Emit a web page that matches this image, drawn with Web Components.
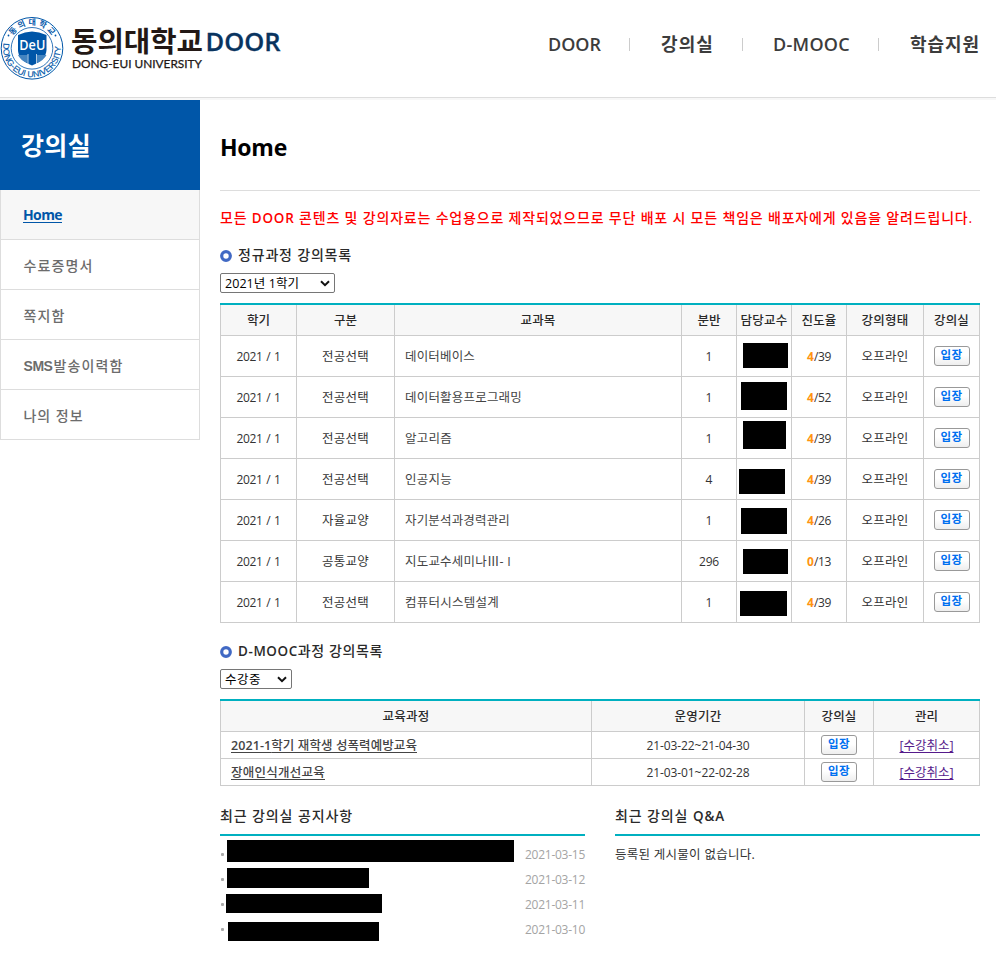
<!DOCTYPE html>
<html lang="ko">
<head>
<meta charset="utf-8">
<title>동의대학교 DOOR</title>
<style>
html,body{margin:0;background:#fff}
body{font-family:"Open Sans","Noto Sans CJK KR",sans-serif;font-size:12px;color:#333;width:996px;height:956px;overflow:hidden}
</style>
</head>
<body>
<door-page></door-page>
<script>
class Base extends HTMLElement{
  connectedCallback(){
    if(this.shadowRoot)return;
    this.attachShadow({mode:'open'}).innerHTML='<style>*{box-sizing:border-box}'+this.css()+'</style>'+this.html();
    this.ready&&this.ready();
  }
  css(){return ':host{display:block}'}
  html(){return '<slot></slot>'}
  a(n,d=''){return this.getAttribute(n)??d}
}

class DoorPage extends Base{
  css(){return `:host{display:block}
    .body{display:grid;grid-template-columns:200px 760px;column-gap:20px;align-items:start}`}
  html(){return `<door-header></door-header><div class="body"><door-sidebar></door-sidebar><door-main></door-main></div>`}
}

class DoorLogo extends Base{
  css(){return `:host{display:block;width:290px;height:96px}svg{display:block}`}
  html(){return `<svg width="290" height="96" viewBox="0 0 290 96">
    <defs>
      <path id="top" d="M9 48a23 23 0 0 1 46 0"/>
      <path id="bottom" d="M4.300 40a28.900 28.900 0 1 0 55.400 0"/>
    </defs>
    <g fill="none" stroke="#0056a8">
      <circle cx="32" cy="48.300" r="30.800" stroke-width="1"/>
      <circle cx="32" cy="48.300" r="20.800" stroke-width=".8"/>
    </g>
    <path d="M18 35Q25 32 32 31.600Q39 32 46.500 35V50Q46 60 32 65.500Q18 60 18 50Z" fill="#0056a8"/>
    <path d="M18 55h9.500v8Q20 60 18 55ZM46.500 55H37v8Q44 60 46.500 55Z" fill="#4384c0"/>
    <path d="M28 54V64M36.500 54V64" stroke="#fff" stroke-width=".7"/>
    <g fill="#fff" font-family="Open Sans" text-anchor="middle">
      <text x="32.300" y="50" font-size="14" font-weight="600" textLength="26" lengthAdjust="spacingAndGlyphs">DeU</text>
    </g>
    <g fill="#0056a8">
      <text font-family="Noto Sans CJK KR" font-weight="700" font-size="8"><textPath href="#top" startOffset="13" textLength="46">동의대학교</textPath></text>
      <text font-family="Liberation Sans" font-size="8.500" stroke="#0056a8" stroke-width=".15"><textPath href="#bottom" startOffset="3" textLength="98" lengthAdjust="spacingAndGlyphs">DONG-EUI UNIVERSITY</textPath></text>
      <circle cx="8.500" cy="35.500" r=".9"/><circle cx="55.500" cy="35.500" r=".9"/>
    </g>
    <text x="71" y="52" font-family="Noto Sans CJK KR" font-weight="700" font-size="28" fill="#231815" textLength="132" lengthAdjust="spacingAndGlyphs">동의대학교</text>
    <text x="72" y="68" font-family="Lato" font-size="12" fill="#231815" stroke="#231815" stroke-width=".25" textLength="130" lengthAdjust="spacingAndGlyphs">DONG-EUI UNIVERSITY</text>
    <text x="205.500" y="50.500" font-family="Open Sans" font-weight="600" font-size="26" fill="#09345f" stroke="#09345f" stroke-width=".3" textLength="75" lengthAdjust="spacingAndGlyphs">DOOR</text>
  </svg>`}
}

class DoorHeader extends Base{
  css(){return `:host{display:flex;justify-content:space-between;height:100px;border-bottom:2px solid #f7f7f7;box-sizing:border-box;
      background:linear-gradient(#ddd,#ddd) 0 97px/100% 1px no-repeat}
    nav{display:flex;align-items:center;height:26px;margin:31px 16px 0 0;font-size:18px;font-weight:600;color:#3c3c3c;line-height:26px}
    i{width:1px;height:13px;background:#ccc}`}
  html(){return `<door-logo></door-logo><nav>
    <fit-text w="53">DOOR</fit-text><i style="margin:0 31px 0 28px"></i>
    <fit-text w="53" kr>강의실</fit-text><i style="margin:0 30px 0 28px"></i>
    <fit-text w="77">D-MOOC</fit-text><i style="margin:0 31px 0 28px"></i>
    <fit-text w="70" kr>학습지원</fit-text></nav>`}
}

class DoorSidebar extends Base{
  css(){return `:host{display:block}
    h2{margin:0;height:90px;padding:0 0 0 21px;background:#0056a8;color:#fff;font-size:25px;line-height:91px;font-weight:700}`}
  html(){return `<h2><fit-text w="70" kr>강의실</fit-text></h2>
    <side-item w="39" active>Home</side-item><side-item w="70" kr>수료증명서</side-item><side-item w="42" kr>쪽지함</side-item>
    <side-item w="100" sms kr>발송이력함</side-item><side-item w="60" kr>나의 정보</side-item>`}
}
class SideItem extends Base{
  css(){return `:host{display:block;box-sizing:border-box;height:50px;border:1px solid #ddd;border-top:0;padding-left:22.500px;line-height:51px;font-size:14px;font-weight:500;color:#6c6c6c}
    :host([active]){background:#f7f7f7;color:#0056a8;font-weight:700;text-decoration:underline;text-underline-offset:2px;padding-left:22px;line-height:50px}
    b{font:700 14px "Liberation Sans",sans-serif;margin-right:1px}`}
  html(){const sms=this.hasAttribute('sms');
    return `${sms?'<b><fit-text w="29">SMS</fit-text></b>':''}<fit-text w="${sms?70:this.a('w')}" ${this.hasAttribute('kr')?'kr':''}>${this.textContent}</fit-text>`}
}

/* Wraps Latin runs so that their weight matches medium Hangul beside them. */
const L=t=>t.replace(/[A-Z][A-Z&-]+|\d[\d-]*(?=학기 재)/g,m=>`<span style="font-weight:600;${/^\d/.test(m)?'':'font-size:.96em'}">${m.replace(/&(?!amp;)/g,'&amp;')}</span>`);

class RingHeading extends Base{
  css(){return `:host{display:flex;align-items:center;height:20px;font-size:14px;line-height:20px;font-weight:500;color:#2a2a2a}
    svg{width:12px;height:12px;margin:2px 6px 0 0}fit-text{margin-top:-1px}`}
  html(){return `<svg viewBox="0 0 12 12"><circle cx="6" cy="6" r="4.300" fill="#fff" stroke="#4169c4" stroke-width="3.200"/></svg><fit-text kr w="${this.a('w')}">${L(this.textContent)}</fit-text>`}
}

class SelectBox extends Base{
  css(){return `:host{display:flex;box-sizing:border-box;justify-content:space-between;align-items:center;height:20px;border:1px solid #767676;border-radius:2px;padding:1px 4px 0;color:#000;line-height:18px;font-size:12.500px}
    svg{width:10px;height:7px}`}
  html(){return `<fit-text kr w="${this.a('w')}">${this.textContent}</fit-text><svg viewBox="0 0 10 7"><path d="M1 1.300L5 5.200L9 1.300" fill="none" stroke="#111" stroke-width="2"/></svg>`}
}

class EnterButton extends Base{
  css(){return `:host{display:block;box-sizing:border-box;width:36px;height:20px;border:1px solid #999;border-radius:3px;background:linear-gradient(#fff 45%,#eee);color:#0070f0;font-size:11.500px;font-weight:700;line-height:16px;text-align:center}`}
  html(){return `<fit-text kr w="22">입장</fit-text>`}
}

const T=(t,w,x='')=>`<fit-text ${/[가-힣]/.test(t)?'kr':''} w="${w}" ${x}>${L(t)}</fit-text>`;

class GridTable extends Base{
  css(){return `:host{display:block;border-top:2px solid #00b0c0;font-size:12px}
    .t{border-left:1px solid #ccc}
    .r{display:grid;grid-template-columns:${this.a('cols')}}
    .c{height:${this.a('rh')}px;border-right:1px solid #ccc;border-bottom:1px solid #ccc;display:flex;align-items:center;justify-content:center;line-height:20px;padding-top:1px}
    .h .c{height:31px;background:#f7f7f7;font-weight:500;color:#2a2a2a}
    [kr]{font-size:12.500px}
    .l{justify-content:flex-start;padding-left:10px;color:#444}
    .m{justify-content:flex-start;align-items:flex-start;padding:0}
    .m i{background:#000}
    .p b{color:#ff9410;font-weight:700}
    .u{text-decoration:underline;text-underline-offset:2px;font-weight:500}
    .v{text-decoration:underline;text-underline-offset:2px;color:#551a8b}`}
  html(){return `<div class="t"><div class="r h">${this.heads().map(h=>`<div class="c">${T(...h)}</div>`).join('')}</div>${this.rows().map(r=>`<div class="r">${r.join('')}</div>`).join('')}</div>`}
}
class CourseTable extends GridTable{
  heads(){return [['학기',23],['구분',23],['교과목',35],['분반',23],['담당교수',47],['진도율',35],['강의형태',47],['강의실',35]]}
  rows(){return [
    ['전공선택','데이터베이스',70,1,4,39,6,7,45,25],
    ['전공선택','데이터활용프로그래밍',117,1,4,52,4,5,46,28],
    ['전공선택','알고리즘',47,1,4,39,6,3,43,28],
    ['전공선택','인공지능',47,4,4,39,2,10,46,25],
    ['자율교양','자기분석과경력관리',105,1,4,26,4,8,46,26],
    ['공통교양','지도교수세미나Ⅲ- I',106,296,0,13,6,8,45,25],
    ['전공선택','컴퓨터시스템설계',94,1,4,39,3,9,47,25]
  ].map(([k,n,w,no,p,q,x,y,bw,bh])=>[
    `<div class="c">${T('2021 / 1',44,'style="word-spacing:1px"')}</div>`,
    `<div class="c">${T(k,47)}</div>`,
    `<div class="c l">${T(n,w)}</div>`,
    `<div class="c">${T(''+no,no>99?20:7)}</div>`,
    `<div class="c m"><i style="width:${bw}px;height:${bh}px;margin:${y}px 0 0 ${x}px"></i></div>`,
    `<div class="c p"><b>${T(''+p,7)}</b>${T('/'+q,17)}</div>`,
    `<div class="c">${T('오프라인',47)}</div>`,
    `<div class="c" style="padding-top:0"><enter-button></enter-button></div>`])}
}
class MoocTable extends GridTable{
  heads(){return [['교육과정',47],['운영기간',47],['강의실',35],['관리',23]]}
  rows(){return [['2021-1학기 재학생 성폭력예방교육',186,'21-03-22~21-04-30'],['장애인식개선교육',94,'21-03-01~22-02-28']].map(([n,w,d])=>[
    `<div class="c l u">${T(n,w)}</div>`,
    `<div class="c">${T(d,103)}</div>`,
    `<div class="c" style="padding-top:0"><enter-button></enter-button></div>`,
    `<div class="c v">${T('[수강취소]',54)}</div>`])}
}

class BoardPanel extends Base{
  css(){return `:host{display:block}
    h3{margin:0;height:31px;border-bottom:2px solid #00b0c0;font-size:14px;line-height:21px;font-weight:500;color:#2a2a2a}
    .b{padding-top:6px}`}
  html(){return `<h3><fit-text kr w="${this.a('w')}">${L(this.a('heading'))}</fit-text></h3><div class="b"><slot></slot></div>`}
}
class NoticeRow extends Base{
  css(){return `:host{display:flex;align-items:flex-start;height:25px;line-height:25px;color:#a4a4a4}
    i{width:3px;height:3px;border-radius:1px;background:#aaa;margin:11px 0 0 1px;flex:none}
    u{background:#000;flex:none}
    .d{margin-left:auto}`}
  html(){const [x,y,w,h]=this.a('box').split(' ');
    return `<i></i><u style="width:${w}px;height:${h}px;margin:${y}px 0 0 ${x-4}px"></u><span class="d"><fit-text w="60">${this.textContent}</fit-text></span>`}
}

class DoorMain extends Base{
  css(){return `:host{display:block}
    h1{margin:0;height:91px;border-bottom:1px solid #ddd;font-size:23px;line-height:95px;font-weight:700;color:#000}
    .warn{height:20px;line-height:20px;margin:17px 0;font-size:14px;font-weight:500;color:#f00}
    .boards{display:grid;grid-template-columns:365px 365px;column-gap:30px;margin-top:19px}
    select-box{margin:8px 0 10px}`}
  html(){return `<h1><fit-text w="67">Home</fit-text></h1>
    <div class="warn"><fit-text kr w="753">${L('모든 DOOR 콘텐츠 및 강의자료는 수업용으로 제작되었으므로 무단 배포 시 모든 책임은 배포자에게 있음을 알려드립니다.')}</fit-text></div>
    <ring-heading w="114">정규과정 강의목록</ring-heading>
    <select-box w="74" style="width:115px">2021년 1학기</select-box>
    <course-table rh="41" cols="76px 98px 287px 55px 55px 55px 77px 56px"></course-table>
    <ring-heading w="145" style="margin-top:18px">D-MOOC과정 강의목록</ring-heading>
    <select-box w="36" style="width:72px">수강중</select-box>
    <mooc-table rh="27" cols="371px 213px 69px 106px"></mooc-table>
    <div class="boards">
      <board-panel heading="최근 강의실 공지사항" w="133">
        <notice-row box="7 -2 287 22">2021-03-15</notice-row><notice-row box="7 1 142 20">2021-03-12</notice-row>
        <notice-row box="6 2 156 19">2021-03-11</notice-row><notice-row box="8 5 151 19">2021-03-10</notice-row>
      </board-panel>
      <board-panel heading="최근 강의실 Q&amp;A" w="110"><div style="line-height:25px;font-size:12.500px"><fit-text kr w="140">등록된 게시물이 없습니다.</fit-text></div></board-panel>
    </div>`}
}

/* Inline run whose letter-spacing is tuned so that it fills the width given in w. */
class FitText extends Base{
  css(){return `:host{display:inline-block;white-space:nowrap;text-decoration:inherit}span{display:inline-block;text-decoration:inherit}`}
  html(){return `<span><slot></slot></span>`}
  ready(){
    const s=this.shadowRoot.querySelector('span'),w=+this.a('w');
    const n=[...this.textContent].length,nat=s.getBoundingClientRect().width;
    s.style.letterSpacing=((w-nat)/n).toFixed(3)+'px';
    this.style.width=w+'px';this.style.textAlign='left';
  }
}
Object.entries({'door-page':DoorPage,'door-header':DoorHeader,'door-logo':DoorLogo,'door-sidebar':DoorSidebar,'side-item':SideItem,'door-main':DoorMain,'ring-heading':RingHeading,'select-box':SelectBox,'course-table':CourseTable,'mooc-table':MoocTable,'enter-button':EnterButton,'board-panel':BoardPanel,'notice-row':NoticeRow,'fit-text':FitText}).forEach(([k,c])=>customElements.define(k,c));
</script>
</body>
</html>
